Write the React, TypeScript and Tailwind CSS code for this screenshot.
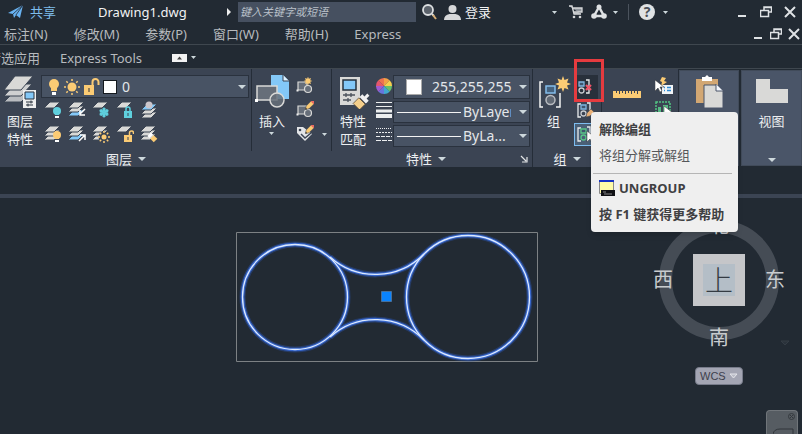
import type React from "react"
import clsx from "clsx"

const PAPER = "#d9d9d7"
const PANEL = "#3b4453"
const AMBER = "#fbcb74"
const CYAN = "#5fd0de"
const SKY = "#83c8f8"

type IconProps = { children: React.ReactNode; size?: number; className?: string }

const Icon: React.FC<IconProps> = ({ children, size = 18, className }) => (
  <svg width={size} height={size} viewBox={`0 0 ${size} ${size}`} className={clsx("shrink-0", className)} aria-hidden="true">
    {children}
  </svg>
)

const Caret: React.FC<{ small?: boolean }> = ({ small }) => (
  <svg width={small ? 5 : 8} height={small ? 3 : 4} viewBox="0 0 8 4" preserveAspectRatio="none" className="shrink-0" aria-hidden="true">
    <path d="M0 0h8L4 4z" fill="#cdd8dc" />
  </svg>
)

const Sheets: React.FC<{ fills: string[] }> = ({ fills }) => (
  <g stroke={PANEL} strokeWidth="1">
    {[...fills].reverse().map((fill, i) => {
      const y = (fills.length - 1 - i) * 4
      return <path key={y} d={`M6 ${y + 1}h10l-6 6h-10z`} fill={fill} />
    })}
  </g>
)

const Bulb: React.FC<{ color: string }> = ({ color }) => (
  <g>
    <circle cx="13" cy="10" r="4" fill={color} />
    <path d="M11 12h4v2h-4z" fill={color} />
    <path d="M11 15h4v2h-4z" fill="#fff" />
  </g>
)

const Lock: React.FC<{ color: string; open?: boolean }> = ({ color, open }) => (
  <g>
    <path d="M8 10h8v7h-8z" fill={color} />
    <path d={open ? "M13.5 10V8a2 2 0 0 1 4 0v1" : "M10 10V8a2 2 0 0 1 4 0v2"} fill="none" stroke={color} strokeWidth="1.5" />
    <path d="M11.5 12h1v3h-1z" fill={PANEL} />
  </g>
)

const Sun: React.FC<{ x: number; y: number; r: number }> = ({ x, y, r }) => (
  <g transform={`translate(${x} ${y})`}>
    <circle r={r} fill={AMBER} />
    {[0, 45, 90, 135, 180, 225, 270, 315].map((a) => (
      <path key={a} d={`M0 ${-r - 1.5}v-2`} stroke={AMBER} strokeWidth="1.5" transform={`rotate(${a})`} />
    ))}
  </g>
)

const Star: React.FC<{ x: number; y: number; scale?: number }> = ({ x, y, scale = 1 }) => (
  <path
    transform={`translate(${x} ${y}) scale(${scale})`}
    d="M0-8L1.5-4 5.5-5.5 4-1.5 8 0 4 1.5 5.5 5.5 1.500 4 0 8-1.5 4-5.5 5.5-4 1.500-8 0-4-1.5-5.5-5.500-1.500-4z"
    fill={AMBER}
  />
)

const Pencil: React.FC<{ x: number; y: number }> = ({ x, y }) => (
  <g transform={`translate(${x} ${y}) rotate(45)`}>
    <path d="M-2-5h4v7l-2 3-2-3z" fill={AMBER} stroke={PANEL} strokeWidth=".5" />
    <path d="M-2-7h4v2.5h-4z" fill="#ec6c62" />
    <path d="M-1 3.5h2L0 5z" fill="#222" />
  </g>
)

const Snowflake = () => (
  <g stroke={CYAN} strokeWidth="1.5" fill="none" transform="translate(12 11.5)">
    {[0, 60, 120].map((a) => (
      <path key={a} d="M0-5V5M-1.5-4L0-2.5 1.5-4M-1.5 4L0 2.5 1.5 4" transform={`rotate(${a})`} />
    ))}
    <circle r="2" />
  </g>
)

const LAYER_TOOLS = [
  { name: "Turn off layer", art: <><Sheets fills={[PAPER]} /><Bulb color={CYAN} /></> },
  { name: "Isolate layer", art: <><Sheets fills={[PAPER, PAPER, SKY]} /><path d="M17 8l-5 5M12 9v5h5" stroke="#fff" strokeWidth="1.5" fill="none" /></> },
  { name: "Freeze layer", art: <><Sheets fills={[PAPER]} /><Snowflake /></> },
  { name: "Lock layer", art: <><Sheets fills={[PAPER]} /><Lock color={CYAN} /></> },
  { name: "Make current", art: <><g transform="translate(1 2)"><Sheets fills={[SKY, PAPER, PAPER]} /></g><circle cx="9" cy="4" r="3.5" fill="#cbc5cb" /></> },
  { name: "Turn on all layers", art: <><Sheets fills={[PAPER, PAPER, PAPER]} /><Bulb color={AMBER} /></> },
  { name: "Unisolate layer", art: <><Sheets fills={[PAPER, PAPER, SKY]} /><path d="M11 16l5-5M12 10h5v5" stroke="#fff" strokeWidth="1.5" fill="none" /></> },
  { name: "Thaw all layers", art: <><Sheets fills={[PAPER, PAPER, PAPER]} /><circle cx="12" cy="12" r="5.5" fill={PANEL} /><Sun x={12} y={12} r={2.5} /></> },
  { name: "Unlock layer", art: <><Sheets fills={[PAPER]} /><Lock color={AMBER} open /></> },
  { name: "Match layer", art: <><Sheets fills={[PAPER, PAPER, PAPER]} /><g transform="translate(12 12) rotate(-45)"><path d="M-2.5-4h5v3h-5z" fill="#fff" /><path d="M-2.5 0h5v5h-5z" fill={AMBER} /></g></> },
]

const MENUS = ["标注(N)", "修改(M)", "参数(P)", "窗口(W)", "帮助(H)", "Express"]

const WindowControls: React.FC<{ tight?: boolean }> = ({ tight }) => (
  <div className={clsx("flex items-center text-[#dfe2e5]", tight ? "gap-1.5" : "gap-3")}>
    <button aria-label="Minimize">
      <Icon size={12}><path d="M2 9h8v2h-8z" fill="currentColor" /></Icon>
    </button>
    <button aria-label="Restore">
      <Icon size={12}><path d="M4 4V1h7.5v5H9M3.5 1.5h8M.5 4.5h8v6h-8z" fill="none" stroke="currentColor" strokeWidth="1.5" /></Icon>
    </button>
    <button aria-label="Close">
      <Icon size={12}><path d="M1 1l10 10M11 1L1 11" stroke="currentColor" strokeWidth="2" /></Icon>
    </button>
  </div>
)

const TitleBar = () => (
  <header className="flex h-6 items-center pr-1.5 pl-2">
    <button className="flex w-[90px] items-center gap-1.5 text-[#7fbdec]">
      <Icon size={16}>
        <path d="M0 9L15 1 12 14 8 11 6 14 5 10z" fill="#68b2f1" />
        <path d="M5 10L15 1 8 11" fill="none" stroke="#222a33" strokeWidth=".8" />
      </Icon>
      共享
    </button>
    <span className="w-[128px] text-[#f1f2f3]">Drawing1.dwg</span>
    <button aria-label="Collapse search" className="w-3">
      <svg width="5" height="8" viewBox="0 0 5 8"><path d="M1 0l4 4-4 4z" fill="#eee" /></svg>
    </button>
    <input
      aria-label="键入关键字或短语"
      placeholder="键入关键字或短语"
      className="h-5 w-[178px] bg-[#465060] px-0.5 text-[11px] text-white italic placeholder:text-[#b9c0c9]"
    />
    <button aria-label="Search" className="ml-1.5">
      <Icon size={16}>
        <circle cx="6" cy="6" r="5" fill="#5b626b" stroke="#dcdfe1" strokeWidth="1.8" />
        <path d="M10 10l2 2" stroke="#dcdfe1" strokeWidth="2" />
        <path d="M11 11l3 4" stroke="#d5ac74" strokeWidth="2" />
      </Icon>
    </button>
    <button className="ml-1.5 flex items-center gap-1 text-[#f1f2f3]">
      <Icon size={17}>
        <circle cx="8.5" cy="5" r="4" fill="#d6d8da" />
        <path d="M0 16q0-5 5.5-6h6q5.5 1 5.5 6z" fill="#d6d8da" />
      </Icon>
      登录
    </button>
    <div className="ml-auto flex items-center gap-2">
      <button aria-label="Account menu" className="mr-1 flex"><Caret small /></button>
      <button aria-label="App store">
        <Icon size={14}>
          <path d="M0 1h3l2 8h7M4 3h9v4H5" fill="#8e949b" stroke="#d6d8da" strokeWidth="1.3" />
          <circle cx="5" cy="12" r="1.3" fill="#d6d8da" /><circle cx="11" cy="12" r="1.3" fill="#d6d8da" />
        </Icon>
      </button>
      <button aria-label="Autodesk app" className="flex items-center gap-1.5">
        <Icon size={16}>
          <path d="M8 3L3 12h10z" fill="none" stroke="#dfe2e4" strokeWidth="2.5" />
          <circle cx="8" cy="3" r="2.5" fill="#dfe2e4" /><circle cx="3" cy="12" r="2.8" fill="#dfe2e4" /><circle cx="13" cy="12" r="2.8" fill="#dfe2e4" />
        </Icon>
        <Caret small />
      </button>
      <span className="mx-0.5 h-4 w-px bg-[#4b535d]" />
      <button aria-label="Help" className="flex items-center gap-2">
        <span className="flex size-4 items-center justify-center rounded-full bg-[#dfe2e4] text-sm font-bold text-[#4a5058]">?</span>
        <Caret small />
      </button>
    </div>
    <div className="ml-[68px]"><WindowControls /></div>
  </header>
)

const MenuBar = () => (
  <nav className="flex h-[21px] items-center border-b border-[#3f474f] pr-0.5 pl-1 text-[#b7babe]">
    <div className="flex gap-[26px]">
      {MENUS.map((menu) => (
        <button key={menu}>{menu}</button>
      ))}
    </div>
    <div className="ml-auto"><WindowControls tight /></div>
  </nav>
)

const TabBar = () => (
  <div className="flex h-6 items-center overflow-hidden border-b border-[#3f474f] pt-0.5 text-[#b7babe]">
    <div className="-ml-3 flex gap-5">
      <button>精选应用</button>
      <button>Express Tools</button>
    </div>
    <button aria-label="Minimize ribbon" className="ml-[30px] flex items-center gap-1">
      <svg width="15" height="8" viewBox="0 0 15 8">
        <path d="M0 0h15v8H0z" fill="#f3f3f3" /><path d="M5 5.5h5L7.5 2.5z" fill="#444" />
      </svg>
      <Caret small />
    </button>
  </div>
)

type PanelProps = { title?: React.ReactNode; children: React.ReactNode; className?: string; full?: boolean }

const Panel: React.FC<PanelProps> = ({ title, children, className, full }) => (
  <section className={clsx("flex shrink-0 flex-col", full && "border-r border-[#252d38]", className)}>
    <div className={clsx("flex min-h-[82px] pt-1.5", !full && "border-r border-[#252d38]")}>{children}</div>
    <div className="flex h-4 items-center justify-center leading-4 text-[#eceef0]">{title}</div>
  </section>
)

const PanelTitle: React.FC<{ children: string }> = ({ children }) => (
  <button className="flex items-center gap-1.5">
    {children}
    <Caret />
  </button>
)

const BigButton: React.FC<{ icon: React.ReactNode; children: React.ReactNode; className?: string }> = ({ icon, children, className }) => (
  <button className={clsx("flex flex-col items-center text-[#eceef0]", className)}>
    {icon}
    <span className="mt-[3px] flex flex-col items-center leading-[18px]">{children}</span>
  </button>
)

const LayerPanel = () => (
  <Panel className="min-w-[252px] flex-1" title={<PanelTitle>图层</PanelTitle>}>
    <BigButton
      className="w-10 shrink-0"
      icon={
        <Icon size={34}>
          <g stroke={PANEL} strokeWidth="1">
            <path d="M12 16h17L18 27H1z" fill="#b9bcc0" />
            <path d="M12 9h17L18 21H1z" fill="#cfd0d1" />
            <path d="M12 1h18L18 15H1z" fill={PAPER} />
          </g>
          <path d="M20 15h13v18H20z" fill="#eee" />
          <path d="M22 17h9v7h-9z" fill={SKY} stroke="#26303c" />
          <path d="M23 27h7M28 25.5v3M23 30h7M25 28.5v3" stroke="#26303c" />
        </Icon>
      }
    >
      <span>图层</span>
      <span>特性</span>
    </BigButton>
    <div className="flex min-w-0 flex-1 flex-col pr-0.5 pl-px">
      <div className="flex h-[23px] items-center gap-1 border border-[#2a323e] bg-[#485364] pr-0.5 pl-[3px]">
        <Icon>
          <circle cx="9" cy="6" r="5" fill={AMBER} /><path d="M6 9h6v4H6z" fill={AMBER} /><path d="M7 14h4v3H7z" fill="#fff" />
        </Icon>
        <Icon className="-ml-1"><Sun x={9} y={9} r={4.5} /></Icon>
        <Icon className="-mx-0.5">
          <path d="M1 7h10v10H1z" fill={AMBER} /><path d="M9.5 7V4a3 3 0 0 1 6 0v3" fill="none" stroke={AMBER} strokeWidth="2" /><path d="M5.5 10h1v4h-1z" fill="#333" />
        </Icon>
        <span className="size-3.5 shrink-0 border border-[#15191e] bg-white" />
        <select aria-label="图层" className="min-w-0 flex-1 appearance-none bg-transparent pl-px text-sm text-[#e3e6e9]">
          <option>0</option>
        </select>
        <Caret />
      </div>
      <div className="mt-[3px] grid grid-cols-[repeat(5,18px)] gap-1.5 pl-[3px]">
        {LAYER_TOOLS.map(({ name, art }) => (
          <button key={name} aria-label={name}><Icon>{art}</Icon></button>
        ))}
      </div>
    </div>
  </Panel>
)

const BlockShape = () => (
  <g fill="#666e79" stroke="#d9d9d7" strokeWidth="1.2">
    <path d="M2 5h9v8H2z" /><circle cx="12" cy="12" r="3.5" /><path d="M.5 12.5h2v2h-2z" fill="#eee" stroke="none" />
  </g>
)

const BlockPanel = () => (
  <Panel className="w-20">
    <BigButton
      className="w-10"
      icon={
        <Icon size={34}>
          <path d="M16 0h12l6 6v18H16z" fill={SKY} /><path d="M28 0v6h6" fill="#dff1ff" stroke={PANEL} />
          <g fill="#666e79" stroke="#d9d9d7" strokeWidth="1.5">
            <path d="M2 11h20v14H2z" /><circle cx="22" cy="25" r="7" fillOpacity=".85" />
          </g>
          <path d="M0 24h3v3H0z" fill="#fff" />
        </Icon>
      }
    >
      <span>插入</span>
      <span className="mt-0.5 flex"><Caret small /></span>
    </BigButton>
    <div className="flex flex-col gap-1.5 pt-0.5 pl-1">
      <button aria-label="Create block"><Icon><BlockShape /><Star x={12} y={4} scale={0.55} /></Icon></button>
      <button aria-label="Edit block"><Icon><BlockShape /><Pencil x={13} y={5} /></Icon></button>
      <button aria-label="Edit attributes" className="flex items-center gap-2">
        <Icon><path d="M1 2h6l9 7-7 7-8-8z" fill="#e3e5e7" /><circle cx="4" cy="5" r="1.3" fill={PANEL} /><path d="M5 9l4 4 6-5" fill="none" stroke={PANEL} strokeWidth="1.5" /><Pencil x={13} y={5} /></Icon>
        <Caret small />
      </button>
    </div>
  </Panel>
)

const WHEEL = ["#f3a146", "#f7d04e", "#66bf6b", "#42a8d0", "#6775dd", "#a15bd0", "#e4566d", "#ed7350"]

const ColorWheel = () => (
  <Icon size={16}>
    {WHEEL.map((fill, i) => (
      <path key={fill} d="M8 8V0a8 8 0 0 1 5.66 2.34z" fill={fill} transform={`rotate(${i * 45} 8 8)`} />
    ))}
  </Icon>
)

const LineCombo: React.FC<{ label: string; value: string; clip?: boolean }> = ({ label, value, clip }) => (
  <div className="flex h-[22px] items-center gap-0.5 border border-[#2a323e] bg-[#485364] pr-0.5 pl-[3px] text-sm text-[#e3e6e9]">
    <span className="h-px flex-1 bg-[#f4f4f4]" />
    <select aria-label={label} className={clsx("w-12 appearance-none overflow-hidden bg-transparent leading-5", clip ? "text-clip" : "text-ellipsis")}>
      <option>{value}</option>
    </select>
    <span className="ml-1.5"><Caret /></span>
  </div>
)

const PropertiesPanel = () => (
  <Panel
    full
    className="w-[201px]"
    title={
      <div className="flex w-full items-center pr-1">
        <span className="flex flex-1 justify-center"><PanelTitle>特性</PanelTitle></span>
        <button aria-label="Properties dialog"><Icon size={8}><path d="M1 1l5 5M7 2v5H2" fill="none" stroke="#e3e5e7" strokeWidth="1.2" /></Icon></button>
      </div>
    }
  >
    <BigButton
      className="w-[42px] shrink-0"
      icon={
        <Icon size={34}>
          <path d="M4 2h20v28H4z" fill={PAPER} /><path d="M7 5h13v10H7z" fill={SKY} stroke="#26303c" strokeWidth="1.5" />
          <path d="M7 20h12M7 25h8M10 18v4M15 18v4M12 23v4" stroke="#4c535c" strokeWidth="1.3" />
          <g transform="translate(26 26) rotate(45)">
            <path d="M-1.5-9h3v4h3v4h-9v-4h3z" fill="#f1f1f1" /><path d="M-4.5 0h9v8h-9z" fill="#f4ce8a" stroke="#554632" strokeWidth=".7" />
          </g>
        </Icon>
      }
    >
      <span>特性</span>
      <span>匹配</span>
    </BigButton>
    <div className="flex w-[19px] shrink-0 flex-col items-center gap-2 pt-[3px]">
      <button aria-label="Object colour"><ColorWheel /></button>
      <button aria-label="Lineweight">
        <Icon size={16}><path d="M0 .5h16M0 4.5h16" stroke="#eceeef" /><path d="M0 9h16" stroke="#eceeef" strokeWidth="3" /><path d="M0 14h16" stroke="#eceeef" strokeWidth="4" /></Icon>
      </button>
      <button aria-label="Linetype">
        <Icon size={16}><path d="M0 2.5h16" stroke="#eceeef" strokeDasharray="1 1" /><path d="M0 6.5h16" stroke="#eceeef" strokeDasharray="2 1" /><path d="M0 10.5h16" stroke="#eceeef" strokeDasharray="4 1" /><path d="M0 14.5h16" stroke="#eceeef" strokeDasharray="5 1" /></Icon>
      </button>
    </div>
    <div className="flex min-w-0 flex-1 flex-col gap-0.5 pr-0.5">
      <div className="flex h-6 items-center border border-[#2a323e] bg-[#485364] pr-0.5 pl-3 text-sm text-[#e3e6e9]">
        <span className="size-4 shrink-0 border border-[#aaa] bg-white" />
        <select aria-label="颜色" className="ml-2.5 min-w-0 flex-1 appearance-none bg-transparent">
          <option>255,255,255</option>
        </select>
        <Caret />
      </div>
      <LineCombo label="线宽" value="ByLayer" clip />
      <LineCombo label="线型" value="ByLa..." />
    </div>
  </Panel>
)

const GroupGlyph: React.FC<{ green?: boolean; open?: boolean }> = ({ green, open }) => {
  const line = green ? "#58c587" : "#7fb4df"
  return (
    <g fill="none" strokeWidth="1.3">
      {!open && <path d="M4 2H1v13h3" stroke="#e9ebed" />}
      <path d={open ? "M8 1h3v13H8" : "M10 1h3v12"} stroke="#e9ebed" />
      <path d={open ? "M1 3h5v4H1z" : "M4 3h5v4H4z"} stroke={line} fill="#3f566d" />
      <circle cx={open ? 3.5 : 6.5} cy="11.5" r="2.5" stroke={green ? line : "#c8cbd0"} />
    </g>
  )
}

const Cursor: React.FC<{ x: number; y: number }> = ({ x, y }) => (
  <path transform={`translate(${x} ${y})`} d="M0 0v11l3-3 2 4 2-1-2-4h4z" fill="#fff" stroke="#333" strokeWidth=".5" />
)

const UngroupTip = () => (
  <div
    id="ungroup-tip"
    role="tooltip"
    className="absolute top-[37px] left-[17px] z-20 w-[147px] rounded-sm bg-[#efefef] pt-[7px] pb-2 font-bold whitespace-nowrap text-[#3f4042] shadow-md"
  >
    <p className="px-2 leading-5">解除编组</p>
    <p className="mt-1.5 px-2 leading-5 font-normal text-[#55575a]">将组分解或解组</p>
    <hr className="mx-0.5 mt-2 mr-1.5 border-[#b5b5b5]" />
    <p className="mt-1 flex items-center gap-1 px-2 leading-5">
      <Icon size={16}>
        <path d="M.5.5h14v13H.5z" fill="#fffca8" stroke="#888" /><path d="M0 0h15v2H0z" fill="#1631c5" />
        <path d="M2 10h14v6H2z" fill="#101114" /><path d="M4 12h3M5 14h8" stroke="#888" />
      </Icon>
      UNGROUP
    </p>
    <p className="mt-1.5 px-2 leading-5">按 F1 键获得更多帮助</p>
  </div>
)

const GroupPanel = () => (
  <Panel full className="w-[69px]" title={<PanelTitle>组</PanelTitle>}>
    <BigButton
      className="w-[41px] shrink-0"
      icon={
        <Icon size={34}>
          <path d="M6 7H3v25h3M19 32h4V18" fill="none" stroke="#f3f3f3" strokeWidth="1.5" />
          <path d="M9 11h9v7H9z" fill="#46637f" stroke="#84bdeb" strokeWidth="1.5" />
          <circle cx="13.5" cy="25" r="4.5" fill="#626a75" stroke="#b9bcc1" strokeWidth="1.5" />
          <Star x={26} y={9} />
        </Icon>
      }
    >
      组
    </BigButton>
    <div className="relative flex flex-col">
      <button aria-label="解除编组" aria-describedby="ungroup-tip" className="flex h-6 w-6 items-center justify-center bg-[#28303b]">
        <Icon><g transform="translate(1 1)"><GroupGlyph open /><path d="M8 6l5 5M13 6l-5 5" stroke="#ef5367" strokeWidth="2.2" /></g></Icon>
      </button>
      <button aria-label="Edit group" className="flex h-6 w-6 items-center justify-center">
        <Icon><GroupGlyph /><path d="M9 15l1-4 4-4 3 3-4 4z" fill="#e9b077" stroke={PANEL} strokeWidth=".5" /></Icon>
      </button>
      <button aria-label="Group selection" className="flex h-[23px] w-6 items-center justify-center border border-[#7dbdf0] bg-[#4b6077]">
        <Icon><GroupGlyph green /><Cursor x={10} y={5} /></Icon>
      </button>
      <div className="pointer-events-none absolute -top-4 left-0 h-[43px] w-[30px] border-3 border-[#e53b3f]" />
      <UngroupTip />
    </div>
  </Panel>
)

const UtilityPanel = () => (
  <Panel className="w-[77px]">
    <button aria-label="Measure" className="ml-[11px] flex h-[38px] items-center">
      <svg width="28" height="7" viewBox="0 0 28 7">
        <path d="M0 0h28v7H0z" fill={AMBER} />
        <path d="M3.5 0v2M6.5 0v3M9.5 0v2M12.5 0v3M15.5 0v2M18.5 0v3M21.5 0v2M24.5 0v3" stroke={PANEL} />
      </svg>
    </button>
    <div className="ml-3.5 flex flex-col gap-1.5 pt-0.5">
      <button aria-label="Quick select">
        <Icon>
          <path d="M7 8h11v9H7z" fill="#f2f5f7" /><path d="M9 10.5h1M9 13.5h1M12 10.5h4M12 13.5h4" stroke="#2f8bd4" strokeWidth="1.5" />
          <path d="M7 0l4 1-2 3 3 1-6 4 1-4-2-1z" fill={AMBER} /><Cursor x={0} y={3} />
        </Icon>
      </button>
      <button aria-label="Select all">
        <Icon><path d="M1 1h14v14H1z" fill="none" stroke="#52c583" strokeWidth="1.5" strokeDasharray="2 1" /><path d="M3 6h3v8H3zM8 4h5v10H8z" fill="#56b982" /><Cursor x={9} y={5} /></Icon>
      </button>
    </div>
  </Panel>
)

const SideTile: React.FC<{ icon: React.ReactNode; label: string; className?: string }> = ({ icon, label, className }) => (
  <button className={clsx("flex shrink-0 flex-col items-center border border-[#414b5a] bg-[#4a5568] pt-1 pb-0.5 leading-5 text-[#eceef0]", className)}>
    {icon}
    <span className="mt-0.5">{label}</span>
    <span className="mt-auto flex pb-px"><Caret /></span>
  </button>
)

const Ribbon = () => (
  <div className="relative z-10 flex pr-0.5">
    <div className="flex flex-1 bg-[#3b4453]">
      <LayerPanel />
      <BlockPanel />
      <PropertiesPanel />
      <GroupPanel />
      <UtilityPanel />
    </div>
    <div className="flex gap-0.5 pt-px pb-px">
      <SideTile
        className="w-[60px]"
        label="粘贴"
        icon={
          <Icon size={34}>
            <path d="M4 4h22v24H4z" fill="#d2a773" /><path d="M10 2h3l2-2 2 2h3v4H10z" fill="#fff" />
            <path d="M12 10h13l6 6v17H12z" fill={PAPER} stroke="#4a5568" /><path d="M24 9v7h7" fill="#f4f8ff" stroke="#4a5568" />
          </Icon>
        }
      />
      <SideTile
        className="w-[61px]"
        label="视图"
        icon={<Icon size={34}><path d="M1 4h14v10h18v14H1z" fill={PAPER} /></Icon>}
      />
    </div>
  </div>
)

// Two circles joined by a pair of tangent fillets, shown selected.
const Drawing = () => (
  <svg width="304" height="132" viewBox="235 231 304 132" className="absolute top-[33px] left-[235px]" aria-label="Drawing">
    <path d="M236.5 232.5h301v129h-301z" fill="none" stroke="#7d8184" />
    {[
      { color: "#2b56b5", width: 6, opacity: 0.4 },
      { color: "#3c72e6", width: 3.5, opacity: 0.8 },
      { color: "#dce9ff", width: 1.3, opacity: 1 },
    ].map(({ color, width, opacity }) => (
      <g key={width} fill="none" stroke={color} strokeWidth={width} opacity={opacity}>
        <circle cx="295" cy="297" r="52.5" />
        <circle cx="468" cy="297" r="61.5" />
        <path d="M330 257A68 68 0 0 0 424 254M330 337A68 68 0 0 1 424 340" />
      </g>
    ))}
    <path d="M381.5 291.5h10v10h-10z" fill="#0a84ff" stroke="#47709c" />
  </svg>
)

const ViewCube = () => (
  <div className="absolute top-4 right-[17px] flex w-[132px] flex-col items-center text-[#c9cccf]">
    <svg width="122" height="122" viewBox="0 0 122 122" className="absolute top-[5px] left-[5px]" aria-hidden="true">
      <circle cx="61" cy="61" r="53.5" fill="none" stroke="#454c55" strokeWidth="13" />
    </svg>
    <button className="relative text-xl leading-6">北</button>
    <div className="relative mt-4 flex w-full items-center justify-between">
      <button className="text-xl">西</button>
      <button className="flex size-[52px] items-center justify-center bg-[#c5c6c9]">
        <span className="flex size-8 items-center justify-center bg-[#b4bec7] text-[28px] leading-8 font-light text-[#343b43]">上</span>
      </button>
      <button className="text-xl">东</button>
    </div>
    <button className="relative mt-5 text-xl leading-6">南</button>
    <button className="mt-[17px] flex h-[18px] w-12 items-center justify-between rounded-sm border border-[#777b8a] bg-[#a3a5b3] px-1 font-['Liberation_Sans',sans-serif] text-[11px] text-[#3d404c]">
      WCS
      <svg width="9" height="6" viewBox="0 0 9 6"><path d="M1 1h7L4.5 5z" fill="#b9bbc6" stroke="#e4e5ea" /></svg>
    </button>
  </div>
)

const Canvas = () => (
  <main className="relative min-h-[236px] flex-1 overflow-hidden border-t-4 border-[#3b4453]">
    <Drawing />
    <ViewCube />
    <svg width="10" height="6" viewBox="0 0 10 6" className="absolute top-[142px] right-3" aria-hidden="true">
      <path d="M1 1h8L5 5z" fill="#2a323b" stroke="#343c45" />
    </svg>
    <div className="absolute right-1 bottom-0 h-6 w-8 rounded-t-sm border border-b-0 border-[#70757a] bg-[#565c62]">
      <button aria-label="Close navigation bar" className="absolute top-0.5 right-0.5">
        <Icon size={7}><circle cx="3.5" cy="3.5" r="3" fill="none" stroke="#35393e" /><path d="M2 2l3 3M5 2L2 5" stroke="#35393e" /></Icon>
      </button>
      <svg width="22" height="6" viewBox="0 0 22 6" className="absolute bottom-0 left-1.5" aria-hidden="true">
        <path d="M0 6q1-5 7-5h13v5" fill="none" stroke="#30353a" />
      </svg>
    </div>
  </main>
)

export default function App() {
  return (
    <div className="flex min-h-screen flex-col overflow-hidden bg-[#222a33] font-['Noto_Sans','Noto_Sans_CJK_SC',sans-serif] text-[13px] leading-5">
      <TitleBar />
      <MenuBar />
      <TabBar />
      <Ribbon />
      <div className="h-[27px] shrink-0" />
      <Canvas />
    </div>
  )
}
